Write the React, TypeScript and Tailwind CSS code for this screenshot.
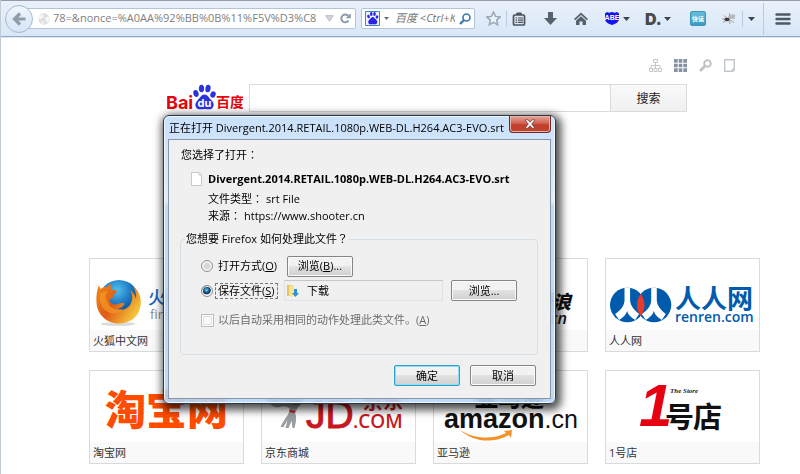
import type { ReactNode } from 'react';

const ui = 'font-["Open_Sans","Noto_Sans_CJK_SC",sans-serif]';
const cjk = '"Noto Sans CJK SC", sans-serif';

function Caret() {
  return (
    <svg className="ml-[3px] h-1 w-[7px] shrink-0" viewBox="0 0 7 4" aria-hidden="true">
      <path d="M0 0h7L3.500 4z" fill="#3b444f" />
    </svg>
  );
}

function Divider({ className }: { className: string }) {
  return <span className={`${className} w-px shrink-0 bg-[#bccbdc]`} />;
}

function Mark({ children }: { children: ReactNode }) {
  return <span className='font-["Noto_Sans_CJK_TC",sans-serif] leading-none'>{children}</span>;
}

function Paw({ fill }: { fill: string }) {
  return (
    <g fill={fill}>
      <ellipse cx="3" cy="9" rx="2.600" ry="3.500" transform="rotate(-15 3 9)" />
      <ellipse cx="8.500" cy="4" rx="2.600" ry="3.800" />
      <ellipse cx="15" cy="4" rx="2.600" ry="3.800" transform="rotate(8 15 4)" />
      <ellipse cx="20" cy="10" rx="2.600" ry="3.300" transform="rotate(20 20 10)" />
      <path d="M11.500 10c3 0 4 3 6.500 5.200 2.800 2.600 3.300 5 2 7.500-1.500 2.800-5 2-8.500 1.800-3.500.2-7 1-8.500-1.800-1.300-2.500-.5-5 2-7.500C7.500 13 8.500 10 11.500 10z" />
    </g>
  );
}

function Toolbar() {
  return (
    <header className="flex h-[37px] items-center border-t border-b border-t-[#9599a8] border-b-[#8fabca] bg-linear-to-b from-[#e9f1fb] to-[#d8e7f7] pl-1 pr-[9px] shadow-[0_1px_0_#dfe6ee]">
      <button type="button" aria-label="后退" className="relative z-10 flex size-7 shrink-0 items-center justify-center rounded-full border border-[#a3b9d1] bg-linear-to-b from-[#eff5fc] to-[#d6e5f6]">
        <svg className="size-[14px]" viewBox="0 0 14 14" fill="none" stroke="#8f9dac" strokeWidth="3.200" aria-hidden="true">
          <path d="M8 1.500 2.500 7 8 12.500M3 7h10.500" />
        </svg>
      </button>
      <div className="-ml-3 flex h-[21px] min-w-0 flex-1 items-center rounded-r-xs border border-[#b4c5d8] bg-white pl-4 pr-1">
        <svg className="size-3 shrink-0" viewBox="0 0 12 12" aria-hidden="true">
          <circle cx="6" cy="6" r="5.700" fill="#dcdee0" />
          <path d="M1 3.500 4 1.500l2 1-1 2-2 .8-1.500 2zM7 5l3-1.500 1.500 2-1 3-2 1L8 7.500zM3 8l2 .5 1 2-1.500.8z" fill="#f8f8f8" />
        </svg>
        <input aria-label="网址" defaultValue="78=&nonce=%A0AA%92%BB%0B%11%F5V%D3%C8" className={`ml-[3px] min-w-0 flex-1 bg-transparent text-[11px] text-[#808080] outline-none ${ui}`} />
        <svg className="ml-0.5 h-[7px] w-[9px] shrink-0" viewBox="0 0 9 7" aria-hidden="true">
          <path d="M.8.700h7.400L4.500 6.300z" fill="#d2d7dd" stroke="#b4bac2" />
        </svg>
        <button type="button" aria-label="刷新" className="ml-1.5 shrink-0">
          <svg className="block size-[11px]" viewBox="0 0 11 11" aria-hidden="true">
            <path d="M8.500 7.500A3.900 3.900 0 1 1 8.300 3" fill="none" stroke="#8b99a8" strokeWidth="2" />
            <path d="M10.800.200v5H5.700z" fill="#8b99a8" />
          </svg>
        </button>
      </div>
      <div className="ml-[5px] flex h-[21px] w-[114px] shrink-0 items-center rounded-xs border border-[#b4c5d8] bg-white px-[3px]">
        <svg className="size-[15px] shrink-0" viewBox="0 0 30 30" aria-hidden="true">
          <path d="M1 1h28v28H1z" fill="#eef4fd" stroke="#3c84c8" strokeWidth="2" />
          <g transform="translate(4 2)"><Paw fill="#2b25e0" /></g>
        </svg>
        <svg className="ml-1 h-[3px] w-[5px] shrink-0" viewBox="0 0 7 4" aria-hidden="true">
          <path d="M0 0h7L3.500 4z" fill="#666d75" />
        </svg>
        <input aria-label="搜索" placeholder="百度 <Ctrl+K>" className={`ml-1.5 min-w-0 flex-1 text-[11px] italic outline-none placeholder:text-[#777] ${ui}`} />
        <svg className="ml-1 size-3 shrink-0" viewBox="0 0 12 12" fill="none" stroke="#3d7db4" aria-hidden="true">
          <circle cx="7.500" cy="4.500" r="3.500" strokeWidth="1.700" />
          <path d="M5 7 1 11" strokeWidth="2.400" />
        </svg>
      </div>
      <button type="button" aria-label="收藏" className="ml-2 flex w-5 shrink-0 justify-center">
        <svg className="size-[15px]" viewBox="0 0 15 15" aria-hidden="true">
          <path d="m7.500 1 2 4.400 4.700.5-3.500 3.200 1 4.700-4.200-2.400-4.200 2.400 1-4.700L.8 5.900l4.700-.5z" fill="#e9f0f8" stroke="#9aa7b5" strokeWidth="1.500" />
        </svg>
      </button>
      <Divider className="ml-[3px] h-4" />
      <button type="button" aria-label="书签" className="ml-1 w-4 shrink-0">
        <svg className="mx-auto block size-[14px]" viewBox="0 0 14 14" aria-hidden="true">
          <rect x="1.500" y="3" width="11" height="10" rx="1" fill="#dfe8f2" stroke="#4a545f" strokeWidth="1.700" />
          <path d="M4 3V1.500L5 .500h4l1 1V3z" fill="#4a545f" />
          <path d="M3.500 6h1.700M6 6h5M3.500 8.200h1.700M6 8.200h5M3.500 10.400h1.700M6 10.400h5" stroke="#4a545f" strokeWidth="1.200" />
        </svg>
      </button>
      <button type="button" aria-label="下载" className="ml-[15px] w-4 shrink-0">
        <svg className="mx-auto block size-[13px]" viewBox="0 0 13 13" aria-hidden="true">
          <path d="M4 0h5v6h4L6.500 13 0 6h4z" fill="#566270" />
        </svg>
      </button>
      <button type="button" aria-label="主页" className="ml-[15px] w-4 shrink-0">
        <svg className="mx-auto block size-[14px]" viewBox="0 0 14 14" aria-hidden="true">
          <path d="M7 .500 14 7l-1.200 1.300L7 3 1.200 8.300 0 7z" fill="#566270" />
          <path d="m7 4.200 5 4.600V13H8.500V9.500h-3V13H2V8.800z" fill="#566270" />
        </svg>
      </button>
      <button type="button" aria-label="ABE" className="ml-[15px] flex shrink-0 items-center">
        <svg className="h-[13px] w-4" viewBox="0 0 16 13" aria-hidden="true">
          <path d="M1 1.500 3 0l2 .7L8 0l3 .7 2-.7 2 1.500v5.500c0 3-3.500 5-7 6-3.500-1-7-3-7-6z" fill="#1414ee" />
          <text x="8" y="8" textAnchor="middle" fontSize="7" fontWeight="700" fontFamily="Liberation Sans, sans-serif" fill="#fff">ABE</text>
        </svg>
        <Caret />
      </button>
      <button type="button" className="ml-[15px] flex shrink-0 items-center">
        <span className="w-4 font-[Inter,sans-serif] text-base/4 font-black text-[#4a4a4a]">D.</span>
        <Caret />
      </button>
      <button type="button" className="ml-[19px] flex h-[15px] w-4 shrink-0 items-center justify-center rounded-xs border border-[#3f95b8] bg-linear-to-b from-[#66bdd9] to-[#3a9bc2] font-['Noto_Sans_CJK_SC',sans-serif] text-[6px]/3 font-bold text-white">
        快读
      </button>
      <button type="button" aria-label="Firebug" className="ml-[15px] w-4 shrink-0">
        <svg className="mx-auto block h-3 w-[14px]" viewBox="0 0 14 12" aria-hidden="true">
          <path d="M5 5 2 2.500M5 6H0M5 7 1 9.500M7 7l1 4M8 7l4 2.500M8 5h5M7 4l1-4" stroke="#8a8a8a" strokeWidth=".8" fill="none" />
          <ellipse cx="9.500" cy="3.800" rx="4" ry="2" fill="#b6b8ba" transform="rotate(-25 9.500 3.800)" />
          <ellipse cx="5" cy="6.500" rx="2.600" ry="1.800" fill="#3e3a36" />
        </svg>
      </button>
      <Divider className="ml-[5px] h-4" />
      <button type="button" aria-label="更多" className="ml-0.5 flex shrink-0"><Caret /></button>
      <Divider className="ml-2 h-8" />
      <button type="button" aria-label="菜单" className="ml-[11px] w-4 shrink-0">
        <svg className="block h-3 w-4" viewBox="0 0 16 12" aria-hidden="true">
          <path d="M1.500 1.500h13M1.500 6h13M1.500 10.500h13" stroke="#4c5866" strokeWidth="2.400" strokeLinecap="round" />
        </svg>
      </button>
    </header>
  );
}

function ViewIcons() {
  return (
    <nav aria-label="视图" className="flex h-[13px] items-center justify-end gap-3 pr-[25px]">
      <button type="button" aria-label="导航">
        <svg className="block size-[13px]" viewBox="0 0 13 13" fill="none" stroke="#c3c6ca" aria-hidden="true">
          <path d="M4.500.500h4v3h-4zM.500 9.500h3v3h-3zM5 9.500h3v3H5zM9.500 9.500h3v3h-3zM6.500 4v5M2 9V6.500h9V9" />
        </svg>
      </button>
      <button type="button" aria-label="宫格">
        <svg className="block size-[13px]" viewBox="0 0 13 13" fill="#8692a2" aria-hidden="true">
          <path d="M0 0h3.700v3.700H0zM4.700 0h3.600v3.700H4.700zM9.300 0H13v3.700H9.300zM0 4.700h3.700v3.600H0zM4.700 4.700h3.600v3.600H4.700zM9.300 4.700H13v3.600H9.300zM0 9.300h3.700V13H0zM4.700 9.300h3.600V13H4.700zM9.300 9.300H13V13H9.300z" />
        </svg>
      </button>
      <button type="button" aria-label="查找">
        <svg className="block size-[13px]" viewBox="0 0 13 13" fill="none" stroke="#bfc2c6" aria-hidden="true">
          <circle cx="8.500" cy="4.500" r="3.300" strokeWidth="2" />
          <path d="M6 7 1 12" strokeWidth="2.600" />
        </svg>
      </button>
      <button type="button" aria-label="便签">
        <svg className="block h-[13px] w-[11px]" viewBox="0 0 11 13" fill="none" stroke="#c3c6ca" aria-hidden="true">
          <path d="M.700.700h9.600v10L9 12.300H.700zM10 10.500H8.500V12" strokeWidth="1.400" />
        </svg>
      </button>
    </nav>
  );
}

function BaiduLogo() {
  return (
    <svg className="h-7 w-[76px] shrink-0" viewBox="0 0 76 28" role="img" aria-label="百度">
      <text x="-1" y="24.500" fontSize="18" fontWeight="700" fontFamily="Inter, sans-serif" fill="#e2050b">Bai</text>
      <g transform="translate(26 .5)">
        <Paw fill="#2a32de" />
        <text x="11.500" y="22" fontSize="11" fontWeight="700" textAnchor="middle" fontFamily="Inter, sans-serif" fill="#fff">du</text>
      </g>
      <text x="49" y="23" fontSize="14" fontWeight="700" fontFamily={cjk} fill="#e2050b">百度</text>
    </svg>
  );
}

function Art({ children }: { children?: ReactNode }) {
  return (
    <svg className="mx-auto block h-[71px] w-[153px]" viewBox="0 0 153 71" aria-hidden="true">
      {children}
    </svg>
  );
}

function FirefoxArt() {
  return (
    <Art>
      <defs>
        <radialGradient id="globe" cx="45%" cy="25%" r="75%">
          <stop offset="0" stopColor="#4fc0ee" /><stop offset=".5" stopColor="#1a72bd" /><stop offset="1" stopColor="#0b2a68" />
        </radialGradient>
        <linearGradient id="fox" x1="0" y1="0" x2="1" y2=".6">
          <stop offset="0" stopColor="#f08a1c" /><stop offset=".5" stopColor="#df5a14" /><stop offset="1" stopColor="#f6c83c" />
        </linearGradient>
      </defs>
      <ellipse cx="28" cy="65" rx="17" ry="2" fill="#dcdcdc" />
      <circle cx="29" cy="41" r="20" fill="url(#globe)" />
      <path d="M9 26c.5 2 1 3 1.500 4 2-1.500 4-2 6-2 1.500-1.700 3-2.500 5-3-1 2-1 4-.5 5.500 1.500.8 4 .8 6 1-.3 2-1.700 3.300-4 4.500 0 1.500-.3 2.500-.5 3.500-1.500 0-3 .8-3 2 1 3 4 4.500 7 4 3-1 5-2 8-1-1 3-4 5-7.500 5.500 6 2.500 12-1 14-6 2-5 1.500-9-1-13 3.500 2.500 5.500 6 6 9 .5-4-.5-9-3-13 6 5 9 12 7.500 20C49 58 40 64.500 29 64.500 16.500 64.500 7 55 6.500 43.500 6.200 36 7 31 9 26z" fill="url(#fox)" />
      <path d="M10 35c2-2 5-3 8-3-3 3-3 7 0 12 2 5 8 8 15 6-5 6-15 6-20-1-3-4-4-9-3-14z" fill="#f39a25" opacity=".7" />
      <text x="58" y="45" fontSize="18" fontWeight="500" fontFamily={cjk} fill="#1f69bd">火狐</text>
      <text x="60" y="60" fontSize="13" fontFamily="Open Sans, sans-serif" fill="#8a8a8a">firefox.com.cn</text>
    </Art>
  );
}

function SinaArt() {
  return (
    <Art>
      <text x="137" y="50" fontSize="19" fontWeight="900" fontStyle="italic" textAnchor="end" fontFamily={cjk} fill="#111">新浪</text>
      <text x="133" y="65" fontSize="16" fontWeight="600" fontStyle="italic" textAnchor="end" fontFamily="Open Sans, sans-serif" fill="#111">sina.com.cn</text>
    </Art>
  );
}

function RenrenArt() {
  return (
    <Art>
      <defs>
        <clipPath id="left"><circle cx="21.300" cy="46" r="17.300" /></clipPath>
        <clipPath id="right"><circle cx="48" cy="46" r="17.300" /></clipPath>
      </defs>
      <g fill="#005bac">
        <circle cx="21.300" cy="46" r="17.300" />
        <circle cx="48" cy="46" r="17.300" />
      </g>
      <g fill="#fff">
        <path clipPath="url(#left)" d="M18.500 27h5.600v14c0 5 3 9 9 14l-4 6c-4-3-7-5-8-9-1 4-4 6-8 9l-4-6c7-5 9.400-9 9.400-14z" />
        <path clipPath="url(#right)" d="M45.200 27h5.600v14c0 5 3 9 9 14l-4 6c-4-3-7-5-8-9-1 4-4 6-8 9l-4-6c7-5 9.400-9 9.400-14z" />
      </g>
      <path d="M34.700 35c5 6 5 16 0 22-5-6-5-16 0-22z" fill="#e63a2c" />
      <text x="69" y="49" fontSize="26" fontWeight="700" fontFamily={cjk} fill="#005bac">人人网</text>
      <text x="69" y="63" fontSize="14" fontWeight="600" fontFamily="Open Sans, sans-serif" fill="#005bac">renren.com</text>
    </Art>
  );
}

function TaobaoArt() {
  return (
    <Art>
      <text x="15" y="54" fontSize="41" fontWeight="900" fontFamily={cjk} fill="#ff4c00">淘宝网</text>
    </Art>
  );
}

function JdArt() {
  return (
    <Art>
      <path d="M4 32c3-7 8-8 14-7l26 1c-1 4-4 7-8 10l-3 6c2 4 1 9-.5 15h-2l-1-7-3 7h-3l2-8-4 7h-3c2-5 5-9 8-13l1-6c-4-2-7-2-10-1-5 1-8-1-10-4z" fill="#999da1" />
      <path d="M4 32c2-4 6-5 9-4l3 4-6 1zM21 26l22 1c-2 4-5 6-9 7l-11-3z" fill="#53575b" />
      <path d="m28 39 5 1v2l-5-1z" fill="#c7161f" />
      <text x="44" y="57" fontSize="39" fontFamily="Liberation Sans, sans-serif" fill="#c81623" stroke="#c81623">JD</text>
      <text x="91" y="57" fontSize="19" fontFamily="Open Sans, sans-serif" fontWeight="600" fill="#c81623">.COM</text>
      <text x="101" y="38" fontSize="20" fontFamily={cjk} fontWeight="700" fill="#c81623">京东</text>
    </Art>
  );
}

function AmazonArt() {
  return (
    <Art>
      <text x="41" y="35" fontSize="23" fontWeight="900" fontFamily={cjk} fill="#111">亚马逊</text>
      <text x="10" y="57" fontSize="27" fontFamily="Liberation Sans, sans-serif" fill="#111">
        <tspan fontWeight="700">amazon</tspan><tspan fontSize="25">.cn</tspan>
      </text>
      <path d="M26 59c14 9 32 10 46 3l-2-2 8-1-1 8-2-3c-16 9-36 7-49-5z" fill="#f2922a" />
    </Art>
  );
}

function StoreArt() {
  return (
    <Art>
      <text x="33" y="55" fontSize="60" fontWeight="700" fontStyle="italic" fontFamily="Liberation Sans, sans-serif" fill="#e60012">1</text>
      <text x="64" y="22" fontSize="7" fontWeight="700" fontStyle="italic" fontFamily="Liberation Serif, serif" fill="#222">The Store</text>
      <text x="59" y="57" fontSize="29" fontWeight="700" fontFamily={cjk} fill="#111">号</text>
      <text x="87" y="57" fontSize="29" fontWeight="700" fontFamily={cjk} fill="#111">店</text>
    </Art>
  );
}

const sites = [
  { name: '火狐中文网', art: <FirefoxArt /> },
  { name: '新浪微博', art: <Art /> },
  { name: '新浪', art: <SinaArt /> },
  { name: '人人网', art: <RenrenArt /> },
  { name: '淘宝网', art: <TaobaoArt /> },
  { name: '京东商城', art: <JdArt /> },
  { name: '亚马逊', art: <AmazonArt /> },
  { name: '1号店', art: <StoreArt /> },
];

function PushButton({ children, className, primary }: { children: ReactNode; className?: string; primary?: boolean }) {
  const edge = primary
    ? 'border-[#2c9fce] shadow-[inset_0_0_0_1px_#8fdcf5]'
    : 'border-[#858585] shadow-[inset_0_0_0_1px_#fafafa]';
  return (
    <button type="button" className={`h-[21px] w-[66px] shrink-0 rounded-xs border bg-linear-to-b from-[#f2f2f2] from-45% via-[#e2e2e2] via-50% to-[#d0d0d0] text-center text-[11px]/4 ${edge} ${className ?? ''}`}>
      {children}
    </button>
  );
}

const radio =
  'size-3 shrink-0 appearance-none rounded-full border border-[#8c9096] bg-[radial-gradient(circle,#d4d6d8_30%,#f6f6f6_70%)] shadow-[inset_0_0_0_1px_#f8f8f8] checked:bg-[radial-gradient(circle_at_45%_40%,#7fd6f5_0,#17628f_30%,#0b2c4c_48%,#e6eaee_58%)]';

function OpenDialog() {
  return (
    <div role="dialog" aria-labelledby="dialog-title" className={`absolute top-[115px] left-[162px] w-[393px] rounded-md border border-[#2e3742] bg-linear-to-b from-[#c4defa]/90 from-0% via-[#dcebfb]/90 via-30% to-[#b3d5fa]/85 to-31% px-1 pb-1 text-[11px]/4 text-black shadow-[inset_0_0_0_1px_#eef6fe,2px_3px_9px_3px_rgba(0,0,0,0.7)] backdrop-blur-xs ${ui}`}>
      <div className="flex h-[23px] items-start justify-between pl-px">
        <h1 id="dialog-title" className="pt-1 whitespace-nowrap">正在打开 Divergent.2014.RETAIL.1080p.WEB-DL.H264.AC3-EVO.srt</h1>
        <button type="button" aria-label="关闭" className="flex h-[17px] w-[42px] shrink-0 items-center justify-center rounded-b-sm border border-t-0 border-[#6b2a2a] bg-linear-to-b from-[#e6a79c] from-0% via-[#cf6253] via-45% to-[#c2402c] to-55% shadow-[inset_0_0_0_1px_#e9b5ab]">
          <svg className="h-[10px] w-3" viewBox="0 0 12 10" aria-hidden="true">
            <path d="M1 .800h3l2 2.500 2-2.500h3L7.700 5l3.300 4.200H8L6 6.700 4 9.200H1L4.300 5z" fill="#fff" stroke="#6a4a4a" strokeWidth=".8" />
          </svg>
        </button>
      </div>
      <div className="border border-[#8795a5] bg-[#f0f0f0] pt-[7px] pr-3 pb-3 pl-[11px]">
        <p className="h-4 pl-px">您选择了打开<Mark>：</Mark></p>
        <div className="mt-2 flex items-center pl-[11px]">
          <svg className="h-4 w-[11px] shrink-0" viewBox="0 0 11 16" aria-hidden="true">
            <path d="M.500 1.500H8L10.500 4v10.500H.500z" fill="#fff" stroke="#c9c9c9" />
            <path d="M8 1.500V4h2.500" fill="none" stroke="#c9c9c9" />
          </svg>
          <strong className="ml-1.5 font-bold whitespace-nowrap">Divergent.2014.RETAIL.1080p.WEB-DL.H264.AC3-EVO.srt</strong>
        </div>
        <dl className="mt-1 flex flex-col gap-px pl-7">
          <div className="flex h-4"><dt>文件类型<Mark>：</Mark></dt><dd className="ml-[3px]">srt File</dd></div>
          <div className="flex h-4"><dt>来源<Mark>：</Mark></dt><dd className="ml-[3px]">https://www.shooter.cn</dd></div>
        </dl>
        <fieldset className="mt-[7px] min-w-0 rounded-sm border border-[#d3dee6] pr-5 pb-[27px] pl-5">
          <legend className="-ml-4 h-4 px-px">您想要 Firefox 如何处理此文件<Mark>？</Mark></legend>
          <div className="mt-[9px] flex h-5 items-center">
            <input id="open-with" name="action" type="radio" className={radio} />
            <div className="ml-0.5 flex w-[69px] shrink-0">
              <label htmlFor="open-with" className="border border-transparent px-0.5 leading-[14px] whitespace-nowrap">打开方式(<u>O</u>)</label>
            </div>
            <PushButton className="ml-[3px]">浏览(<u>B</u>)...</PushButton>
          </div>
          <div className="mt-1 flex h-[21px] items-center">
            <input id="save-file" name="action" type="radio" defaultChecked className={radio} />
            <div className="ml-0.5 flex w-[69px] shrink-0">
              <label htmlFor="save-file" className="border border-dashed border-[#777] px-0.5 leading-[14px] whitespace-nowrap">保存文件(<u>S</u>)</label>
            </div>
            <div className="flex h-[21px] min-w-0 flex-1 items-center border border-[#dfe3e7] border-t-[#c4c8cc] pl-0.5">
              <svg className="h-[14px] w-3 shrink-0" viewBox="0 0 12 14" aria-hidden="true">
                <path d="M0 1h5l1 1v10H0z" fill="#e9c15a" />
                <path d="m2 2 5-1v12l-5-1z" fill="#f8e29a" />
                <path d="M7 5h3v4h2l-3.500 4L5 9h2z" fill="#2d8fd5" />
              </svg>
              <span className="ml-2">下载</span>
            </div>
            <PushButton className="ml-2">浏览...</PushButton>
          </div>
          <div className="mt-3 flex h-[14px] items-center text-[#6d6d6d]">
            <input id="always" type="checkbox" disabled className="size-[13px] shrink-0 appearance-none border border-[#b9bcc0] bg-[#f9f9f9] shadow-[inset_0_0_0_1px_#fff,inset_0_0_0_2px_#dfe1e3]" />
            <label htmlFor="always" className="ml-1 whitespace-nowrap">以后自动采用相同的动作处理此类文件。(<u>A</u>)</label>
          </div>
        </fieldset>
        <div className="mt-[10px] flex justify-end gap-[10px] pr-0.5">
          <PushButton primary>确定</PushButton>
          <PushButton>取消</PushButton>
        </div>
      </div>
    </div>
  );
}

export default function App() {
  return (
    <div className="relative min-h-screen overflow-hidden border-l border-[#c3cbd4] bg-white">
      <Toolbar />
      <main className="pt-[22px] pb-[10px] pl-12">
        <div className="mx-auto max-w-[671px]">
          <ViewIcons />
          <form className="mt-3 flex h-7 pr-[73px] pl-[78px]" onSubmit={(e) => e.preventDefault()}>
            <BaiduLogo />
            <input aria-label="百度搜索" className="ml-1.5 min-w-0 flex-1 border border-[#d9dadc] bg-white px-2 text-sm outline-none" />
            <button type="submit" className="w-[76px] shrink-0 border border-l-0 border-[#d9dadc] bg-linear-to-b from-[#fafafa] to-[#f0f0f0] font-['Noto_Sans_CJK_SC',sans-serif] text-xs text-[#222]">搜索</button>
          </form>
          <div className="mt-[146px] grid grid-cols-4 gap-x-[17px] gap-y-[18px]">
            {sites.map((site) => (
              <a key={site.name} href="#" className="block overflow-hidden border border-[#d9dadc] bg-white">
                {site.art}
                <span className={`block h-[21px] bg-[#f9f9f9] pl-[3px] text-[11px]/[21px] text-[#333] ${ui}`}>{site.name}</span>
              </a>
            ))}
          </div>
        </div>
      </main>
      <OpenDialog />
    </div>
  );
}
